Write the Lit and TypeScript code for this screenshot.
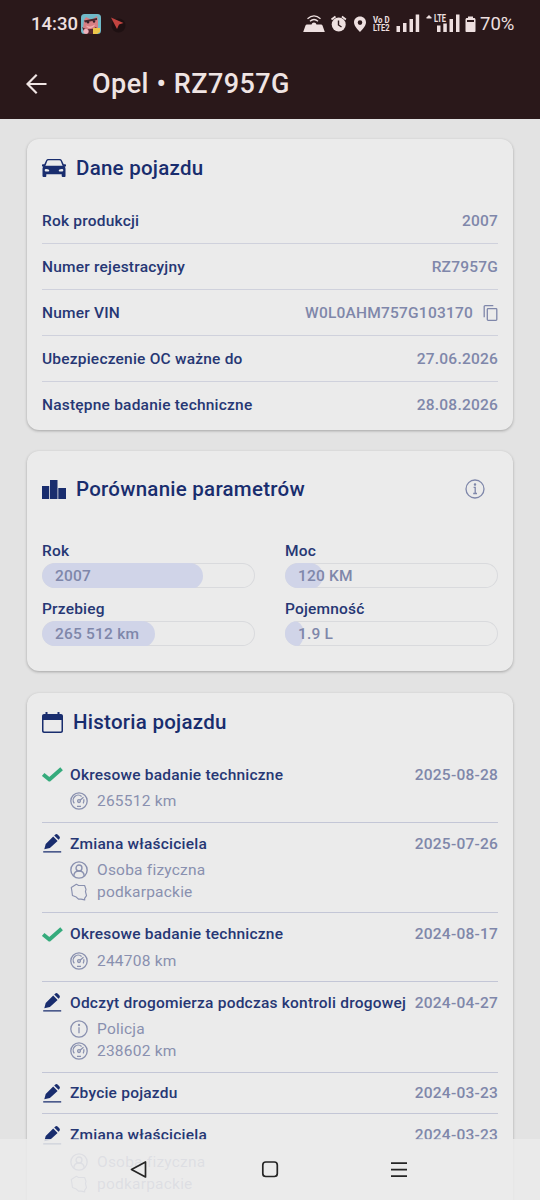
import { LitElement, html, css, svg, nothing } from "lit";
import { customElement, property } from "lit/decorators.js";

const icons: Record<string, unknown> = {
  car: svg`<svg width="24" height="18" viewBox="0 0 24 19" preserveAspectRatio="none">
    <path fill="currentColor" fill-rule="evenodd" d="M6.200 0h11.600c.9 0 1.600.4 2 1.200l1.900 4.400h1.500c.5 0 .8.3.8.7v1c0 .4-.3.7-.8.7h-.5c.5.600.8 1.300.8 2.200v7.800c0 .6-.4 1-1 1h-1.800c-.6 0-1-.4-1-1v-1.800H4.300V18c0 .6-.4 1-1 1H1.500c-.6 0-1-.4-1-1v-7.800c0-.9.3-1.600.8-2.200H.8C.3 8 0 7.700 0 7.300v-1c0-.4.3-.7.8-.7h1.500l1.900-4.400C4.600.400 5.300 0 6.200 0zM6.600 1.200c-.6 0-1 .2-1.200.7L3.400 7.300c1-.2 2-.1 3-.1h11.200c1 0 2-.1 3 .1L18.600 1.900c-.2-.5-.6-.7-1.200-.7zM4.400 10.500c-1.100 0-1.700.5-1.700 1.400s.6 1.400 1.700 1.400h1.800c.7 0 1.100-.3 1.100-.8 0-1-1-2-2.900-2zm15.200 0c-1.900 0-2.900 1-2.900 2 0 .5.4.8 1.100.8h1.800c1.100 0 1.700-.5 1.700-1.400s-.6-1.400-1.700-1.400z"/></svg>`,
  bars: svg`<svg width="24" height="19" viewBox="0 0 24 19"><path fill="currentColor" d="M0 6h7.200v13H0zM8 0h7.500v19H8zM16.300 8H24v11h-7.700z"/></svg>`,
  calendar: svg`<svg width="21" height="21" viewBox="0 0 21 21"><path fill="currentColor" fill-rule="evenodd" d="M3.500 0h2v2h10V0h2v2H19c1.100 0 2 .8 2 1.900V19c0 1.100-.9 2-2 2H2c-1.100 0-2-.9-2-2V3.900C0 2.800.9 2 2 2h1.500zM1.500 8v10.700c0 .5.300.8.8.8h16.400c.5 0 .8-.3.8-.8V8z"/></svg>`,
  info: svg`<svg width="20" height="20" viewBox="0 0 20 20" fill="none" stroke="currentColor" stroke-width="1.300"><circle cx="10" cy="10" r="9"/><path d="M8.600 8.300h1.600v6.200M8.200 14.500h3.800"/><circle cx="10" cy="5.600" r=".6" fill="currentColor"/></svg>`,
  infoPlain: svg`<svg width="18" height="18" viewBox="0 0 18 18" fill="none" stroke="currentColor" stroke-width="1.300"><circle cx="9" cy="9" r="8.200"/><path d="M9 7.300v6"/><circle cx="9" cy="5" r=".5" fill="currentColor"/></svg>`,
  copy: svg`<svg width="15" height="16" viewBox="0 0 14 16" fill="none" stroke="currentColor" stroke-width="1.300"><path d="M.7 12.300V1.600c0-.5.400-.9.900-.9h8.200"/><rect x="3.800" y="3.600" width="9.500" height="11.700" rx=".8"/></svg>`,
  check: svg`<svg width="21" height="15" viewBox="0 0 21 15" fill="none" stroke="#35ab7c" stroke-width="3.900" stroke-linejoin="round"><path d="M1.200 7.400 7.400 12.500 19.600 1.800"/></svg>`,
  pencil: svg`<svg width="19" height="19" viewBox="0 0 19 19" fill="currentColor"><path d="M.2 17.200h18v1.300H.200zM1.300 15.200 2.700 10 10.200 2.500l4.400 4.400-7.700 7.200zM11.200 1.600l.9-.9c.8-.8 1.900-.8 2.700 0l1.500 1.500c.8.8.8 1.900 0 2.700l-.8.900z"/></svg>`,
  gauge: svg`<svg width="18" height="18" viewBox="0 0 18 18" fill="none" stroke="currentColor" stroke-width="1.300"><circle cx="9" cy="9" r="8.200"/><path d="M4.300 11.300A5 5 0 0 1 11.600 4.500M13.700 7.300a5 5 0 0 1-.5 4.100M10 8.200 13.500 5.200M7 14.300h4"/><circle cx="9" cy="9.100" r="1.400"/></svg>`,
  person: svg`<svg width="17" height="17" viewBox="0 0 17 17" fill="none" stroke="currentColor" stroke-width="1.300"><circle cx="8.500" cy="8.500" r="7.700"/><circle cx="8.500" cy="6.600" r="2.800"/><path d="M3.600 14.200c.1-3 2-4.700 4.900-4.700s4.800 1.700 4.900 4.700"/></svg>`,
  poland: svg`<svg width="17" height="17" viewBox="0 0 17 17" fill="none" stroke="currentColor" stroke-width="1.100" stroke-linejoin="round"><path d="M1.200 4.200 6 1.200l1.800 1 6 .2 1.300 3.600-.5 2.200 1 3.800-1.800 2.500.1 1.500-3.500-.8-2.200.1-2.300-2-3.600-1.500-.5-4z"/></svg>`,
  back: svg`<svg width="21" height="20" viewBox="0 0 21 20" fill="none" stroke="currentColor" stroke-width="2.200"><path d="M20.500 10H1.800M10.700.8 1.500 10l9.200 9.200"/></svg>`,
};

@customElement("status-bar")
class StatusBar extends LitElement {
  static styles = css`
    :host { display: flex; align-items: center; height: 47px; box-sizing: border-box; padding: 1px 25px 0 31px; color: #eee0e0; }
    .clock { font-size: 18.500px; font-weight: 500; width: 50px; }
    .left { flex: 1; display: flex; }
    .pct { font-size: 18.500px; width: 35px; }
    svg { display: block; }
    .glyphs { font: 700 8.500px Roboto, sans-serif; }
  `;
  render() {
    return html`
      <span class="clock">14:30</span>
      <span class="left">
        <svg width="50" height="20" viewBox="0 0 50 20">
          <rect width="20" height="20" rx="3.500" fill="#70b9c8"/>
          <path d="M3 6 5 3l4 2h3l4-3 1 5v8l-5 4H4l-2-4z" fill="#d77f83"/>
          <path d="M3 6.500 16 4v2L4 8.500z" fill="#4a252b"/>
          <circle cx="7" cy="8.300" r="1.200" fill="#351f28"/><circle cx="13" cy="7.500" r="1.200" fill="#351f28"/>
          <path d="M1 13c4 3 10 3 14 0l2 3-4 4H4z" fill="#54252c"/>
          <path d="M5 11.500c3 2 6 1 9-1-1 4-7 5-9 1z" fill="#f2b2b2"/>
          <circle cx="5" cy="17.300" r="2.600" fill="#f0b2bc"/><path d="M12 14h7v4l-3 2h-4z" fill="#edc74a"/>
          <circle cx="37.500" cy="11.500" r="7" fill="#1e1012"/>
          <path d="M30 3.500 42.500 9l-4.500 1.500-2 4.500z" fill="#c24440"/>
        </svg>
      </span>
      <svg width="178" height="24" viewBox="302 12 178 24" fill="currentColor">
        <path d="M307 24.500h4.500a2.600 2.600 0 0 1 5 0h4.500c.8 0 1.200.4 1.500 1l2.300 6.500h-21.600l2.300-6.500c.3-.6.700-1 1.500-1z"/>
        <path d="M307.500 18.700q6.500-5.500 13 0M310 21.300q4-3.600 8 0" fill="none" stroke="currentColor" stroke-width="1.300"/>
        <circle cx="338.700" cy="24.500" r="7"/>
        <path d="m331.500 19.500 4-3M345.900 19.500l-4-3" fill="none" stroke="currentColor" stroke-width="1.800"/>
        <path d="M338.500 20.500v4.500l3 2" fill="none" stroke="#2a181a" stroke-width="1.400"/>
        <path fill-rule="evenodd" d="M360 16.500c3.500 0 6 2.500 6 6 0 4.200-6 9.500-6 9.500s-6-5.300-6-9.500c0-3.500 2.500-6 6-6zm0 3.800a2.300 2.300 0 1 0 0 4.600 2.300 2.300 0 0 0 0-4.600z"/>
        <g class="glyphs"><text x="373" y="22.500" textLength="16.500" lengthAdjust="spacingAndGlyphs">Vo D</text><text x="373" y="31" textLength="16.500" lengthAdjust="spacingAndGlyphs">LTE2</text></g>
        <path d="M396.500 26h3.500v6h-3.500zM403 23h3.500v9H403zM409.500 19h3.500v13h-3.500zM415.700 14.500h3.500V32h-3.500z"/>
        <path d="m426.500 17.500 2.500-2.500 2.500 2.500v1h-5z"/>
        <text x="434" y="22" font-size="11" font-weight="700" textLength="12" lengthAdjust="spacingAndGlyphs">LTE</text>
        <path d="M437 25.500h3.500V32H437zM443.300 23.500h3.500V32h-3.500zM449.500 19h3.500v13h-3.500zM456 14.500h3.500V32H456z"/>
        <path fill-rule="evenodd" d="M468 16.500h5V18h1c.9 0 1.500.6 1.500 1.500V31c0 .6-.4 1-1 1h-8c-.6 0-1-.4-1-1V19.500c0-.9.600-1.500 1.500-1.500h1zm-1 3.500v2h7v-2z"/>
      </svg>
      <span class="pct">70%</span>`;
  }
}

@customElement("app-card")
class AppCard extends LitElement {
  @property() heading = "";
  @property() icon = "";
  @property({ type: Boolean }) info = false;
  static styles = css`
    :host { display: block; box-sizing: border-box; background: #ebebeb; border-radius: 12px; padding: 0 15px; box-shadow: 0 1px 3px rgba(0, 0, 0, 0.28); }
    header { display: flex; align-items: center; box-sizing: border-box; height: var(--head, 59px); padding-bottom: var(--lift, 1px); gap: 10px; color: #192d6e; }
    h2 { flex: 1; margin: 0; font-size: 20.500px; line-height: 24px; font-weight: 500; letter-spacing: 0.250px; }
    .info { color: #7f87aa; padding-right: 13px; }
    svg { display: block; }
  `;
  render() {
    return html`<header>${icons[this.icon]}<h2>${this.heading}</h2>
      ${this.info ? html`<span class="info">${icons.info}</span>` : nothing}</header><slot></slot>`;
  }
}

const facts = [
  ["Rok produkcji", "2007"],
  ["Numer rejestracyjny", "RZ7957G"],
  ["Numer VIN", "W0L0AHM757G103170", "copy"],
  ["Ubezpieczenie OC ważne do", "27.06.2026"],
  ["Następne badanie techniczne", "28.08.2026"],
];

const meters: [string, string, number][] = [
  ["Rok", "2007", 161],
  ["Moc", "120 KM", 38],
  ["Przebieg", "265 512 km", 113],
  ["Pojemność", "1.9 L", 18],
];

type Entry = { icon: string; title: string; date: string; details: [string, string][] };
const owner: [string, string][] = [["person", "Osoba fizyczna"], ["poland", "podkarpackie"]];
const entries: Entry[] = [
  { icon: "check", title: "Okresowe badanie techniczne", date: "2025-08-28", details: [["gauge", "265512 km"]] },
  { icon: "pencil", title: "Zmiana właściciela", date: "2025-07-26", details: owner },
  { icon: "check", title: "Okresowe badanie techniczne", date: "2024-08-17", details: [["gauge", "244708 km"]] },
  { icon: "pencil", title: "Odczyt drogomierza podczas kontroli drogowej", date: "2024-04-27", details: [["infoPlain", "Policja"], ["gauge", "238602 km"]] },
  { icon: "pencil", title: "Zbycie pojazdu", date: "2024-03-23", details: [] },
  { icon: "pencil", title: "Zmiana właściciela", date: "2024-03-23", details: owner },
];

@customElement("app-root")
class AppRoot extends LitElement {
  static styles = css`
    :host { display: block; position: relative; height: 1200px; overflow: hidden; background: #e3e3e3; font-family: Roboto, sans-serif; color: #263774; }
    svg { display: block; flex: none; }
    .top { background: #2a181a; height: 119px; color: #efe4e3; }
    .bar { display: flex; align-items: center; height: 73px; padding-left: 26px; gap: 45px; }
    h1 { margin: 0; font-size: 27px; font-weight: 500; letter-spacing: 0.450px; word-spacing: 0.300px; }
    main { display: flex; flex-direction: column; gap: 21px; padding: 20px 27px 0; }
    .vehicle { height: 291px; }
    .compare { height: 220px; --head: 77px; }
    .history { height: 540px; margin-top: 1px; --head: 61px; --lift: 3px; }
    .fact { display: flex; align-items: center; justify-content: space-between; height: 46px; box-sizing: border-box; padding-top: 1.500px; border-bottom: 1px solid #cfd1dc; font-size: 15.500px; font-weight: 500; letter-spacing: 0.210px; }
    .fact:last-child { border-bottom: 0; padding-top: 0; }
    .value { display: flex; align-items: center; gap: 10px; color: #7f87aa; }
    .grid { display: grid; grid-template-columns: 213px 213px; column-gap: 30px; row-gap: 12.500px; padding-top: 13.600px; }
    .label { font-size: 15.500px; line-height: 18px; font-weight: 500; letter-spacing: 0.200px; padding-bottom: 3px; }
    .meter { height: 25px; border-radius: 13px; overflow: hidden; display: grid; box-shadow: inset 0 0 0 1px #d9dadd; }
    .fill, .amount { grid-area: 1 / 1; }
    .fill { background: #d0d4e8; border-radius: 13px; }
    .amount { color: #7f87aa; font-size: 15.500px; line-height: 26px; font-weight: 500; letter-spacing: 0.200px; padding-left: 13px; }
    .entry { padding: 10.400px 0 9.250px; border-bottom: 1px solid #c3c6d6; }
    .line { display: flex; align-items: center; height: 21px; font-size: 15.500px; font-weight: 500; letter-spacing: 0.220px; white-space: nowrap; }
    .mark { width: 28px; color: #192d6e; }
    .pencil { padding-left: 1px; width: 27px; }
    .title { flex: 1; }
    .date { color: #7f87aa; }
    .details { padding: 5px 0 0 28px; color: #8990af; }
    .detail { display: flex; align-items: center; height: 22px; font-size: 15.500px; letter-spacing: 0.220px; }
    .small { width: 27px; }
    .small svg { width: 18px; height: 18px; }
    .nav { position: absolute; left: 0; right: 0; bottom: 0; height: 61px; background: rgba(235, 235, 235, 0.86); display: flex; align-items: center; justify-content: center; }
  `;
  render() {
    return html`
      <div class="top">
        <status-bar></status-bar>
        <div class="bar">${icons.back}<h1>Opel • RZ7957G</h1></div>
      </div>
      <main>
        <app-card class="vehicle" icon="car" heading="Dane pojazdu">
          ${facts.map(([k, v, i]) => html`<div class="fact"><span>${k}</span><span class="value">${v}${i ? icons[i] : nothing}</span></div>`)}
        </app-card>
        <app-card class="compare" icon="bars" heading="Porównanie parametrów" info>
          <div class="grid">
            ${meters.map(([k, v, w]) => html`<div><div class="label">${k}</div>
              <div class="meter"><div class="fill" style="width:${w}px"></div><div class="amount">${v}</div></div></div>`)}
          </div>
        </app-card>
        <app-card class="history" icon="calendar" heading="Historia pojazdu">
          ${entries.map((e) => html`<div class="entry">
            <div class="line"><span class="mark ${e.icon}">${icons[e.icon]}</span><span class="title">${e.title}</span><span class="date">${e.date}</span></div>
            ${e.details.length ? html`<div class="details">${e.details.map(([i, t]) => html`<div class="detail"><span class="small">${icons[i]}</span>${t}</div>`)}</div>` : nothing}
          </div>`)}
        </app-card>
      </main>
      <div class="nav">
        <svg width="540" height="61" viewBox="0 1139 540 61" fill="none" stroke="#252525" stroke-width="1.700" stroke-linejoin="round">
          <path d="M131.500 1169.500 145.500 1162v15z"/>
          <rect x="262.800" y="1162" width="14.500" height="14.500" rx="3"/>
          <path d="M391 1163.200h16M391 1169.700h16M391 1176.200h16"/>
        </svg>
      </div>`;
  }
}
